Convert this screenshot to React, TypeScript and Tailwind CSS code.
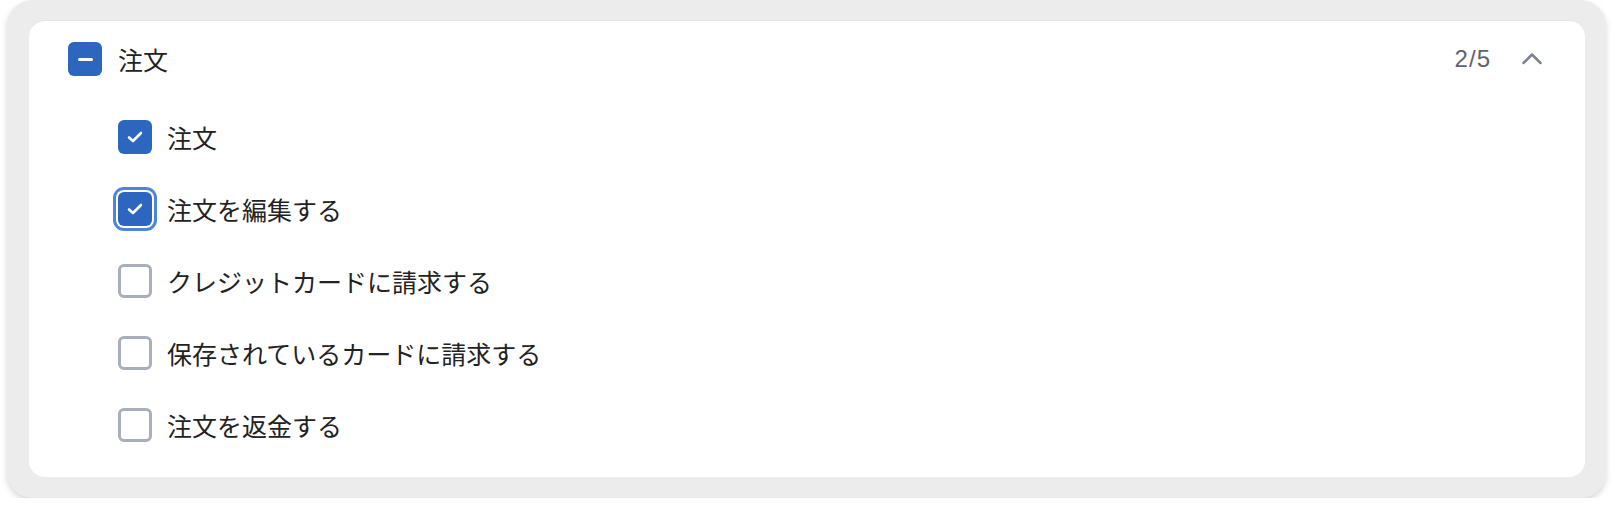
import { useState } from 'react';

type Item = { id: string; label: string; checked: boolean; focused?: boolean };

const initialItems: Item[] = [
  { id: 'orders', label: '注文', checked: true },
  { id: 'edit', label: '注文を編集する', checked: true, focused: true },
  { id: 'charge-card', label: 'クレジットカードに請求する', checked: false },
  { id: 'charge-saved', label: '保存されているカードに請求する', checked: false },
  { id: 'refund', label: '注文を返金する', checked: false },
];

const CheckIcon = () => (
  <svg width="16" height="12" viewBox="0 0 16 12" fill="none" stroke="white" strokeWidth="2.6" strokeLinecap="round" strokeLinejoin="round">
    <path d="M2 6.5 L6 10 L14 2" />
  </svg>
);

const Box = ({ checked, focused, indeterminate }: { checked: boolean; focused?: boolean; indeterminate?: boolean }) => (
  <span
    className={`flex h-[34px] w-[34px] shrink-0 items-center justify-center rounded-[6px] ${
      checked || indeterminate ? 'bg-[#2c66bf]' : 'border-[3px] border-[#a8afba] bg-white'
    } ${focused ? 'shadow-[0_0_0_2px_#ffffff,0_0_0_5px_#4d86d8]' : ''}`}
  >
    {indeterminate ? <span className="h-[3px] w-[15px] rounded-full bg-white" /> : checked ? <CheckIcon /> : null}
  </span>
);

export default function App() {
  const [items, setItems] = useState(initialItems);
  const [open, setOpen] = useState(true);
  const count = items.filter((i) => i.checked).length;

  return (
    <div className="pl-[7px] pt-0 font-['Noto_Sans_CJK_JP','Noto_Sans',sans-serif] text-[#222222]">
      <div className="h-[498px] w-[1599px] rounded-[26px] bg-[#ececec] pt-[20px] pb-[21px] pl-[22px] pr-[21px] shadow-[0_3px_6px_rgba(0,0,0,0.16)]">
        <div className="h-[457px] rounded-[16px] border-t border-[#e2e2e7] bg-white pl-[39px] pr-[41px] pt-[21px]">
          <div className="flex h-[34px] items-center">
            <Box checked={false} indeterminate={count > 0 && count < items.length} />
            <span className="ml-[16px] text-[25px] leading-none">注文</span>
            <span className="ml-auto font-['Liberation_Sans',sans-serif] text-[24px] leading-none tracking-[1px] text-[#5d6470]">
              {count}/{items.length}
            </span>
            <button className="ml-[29px] flex h-[24px] w-[24px] items-center justify-center" onClick={() => setOpen(!open)}>
              <svg width="24" height="24" viewBox="0 0 24 24" fill="none" stroke="#7b8290" strokeWidth="2.5" strokeLinecap="round" strokeLinejoin="round">
                <path d="M3.5 16 L12 7.5 L20.5 16" />
              </svg>
            </button>
          </div>
          {open && (
            <ul className="mt-[44px] flex flex-col gap-[38px] pl-[50px]">
              {items.map((item) => (
                <li
                  key={item.id}
                  className="flex h-[34px] cursor-pointer items-center"
                  onClick={() => setItems(items.map((i) => (i.id === item.id ? { ...i, checked: !i.checked } : i)))}
                >
                  <Box checked={item.checked} focused={item.focused} />
                  <span className="ml-[15px] text-[25px] leading-none">{item.label}</span>
                </li>
              ))}
            </ul>
          )}
        </div>
      </div>
    </div>
  );
}
